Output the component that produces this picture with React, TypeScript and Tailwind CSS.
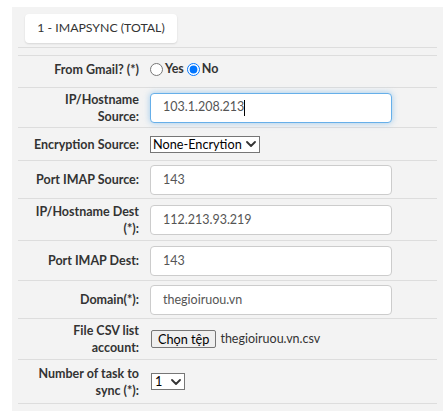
import React from "react";

const Chevron = () => (
  <svg width="10" height="6" viewBox="0 0 10 6" className="shrink-0">
    <path d="M1 1 L5 5 L9 1" fill="none" stroke="#333" strokeWidth="1.8" strokeLinecap="round" strokeLinejoin="round" />
  </svg>
);

const Row = ({ label, h, children }: { label: React.ReactNode; h: string; children: React.ReactNode }) => (
  <div className={`grid grid-cols-[129px_1fr] items-center border-b border-[#dddddd] ${h}`}>
    <div className="pr-2 text-right font-bold text-[12.5px] leading-[17px] text-[#333] whitespace-nowrap">{label}</div>
    <div className="pl-[3px] flex items-center">{children}</div>
  </div>
);

const TextBox = ({ value }: { value: string }) => (
  <input
    readOnly
    value={value}
    className="w-[242px] h-[30px] border border-[#cccccc] rounded-[4px] bg-white px-3 text-[12.5px] text-[#555] outline-none"
  />
);

export default function App() {
  return (
    <div className="bg-white pt-[7px] pl-[12px] pr-[4px] h-[411px] font-['Lato','Liberation_Sans',sans-serif] text-[#333]">
      <div className="bg-[#f3f3f3] px-[6px] pt-[7px] h-[404px]">
        <div className="border-b border-[#dddddd] pb-[4px] pl-[7px]">
          <div className="w-[152px] h-[29px] bg-white rounded-[4px] shadow-[0_1px_2px_rgba(0,0,0,0.12)] flex items-center justify-center text-[12.3px] text-[#333]">
            1 - IMAPSYNC (TOTAL)
          </div>
        </div>
        <div className="mt-[7px] border-t border-[#dddddd]">
          <Row label="From Gmail? (*)" h="h-[32px] pb-[4px]">
            <label className="flex items-center font-bold text-[12.5px]">
              <input type="radio" name="gmail" readOnly className="w-[13px] h-[13px] m-0" />
              <span className="ml-[2px]">Yes</span>
            </label>
            <label className="flex items-center font-bold text-[12.5px] ml-[3px]">
              <input type="radio" name="gmail" checked readOnly className="w-[13px] h-[13px] m-0" />
              <span className="ml-[2px]">No</span>
            </label>
          </Row>
          <Row label={<>IP/Hostname<br />Source:</>} h="h-[40px]">
            <div className="w-[242px] h-[30px] border border-[#66afe9] rounded-[4px] bg-white px-3 flex items-center text-[12.5px] text-[#555] shadow-[0_0_6px_rgba(102,175,233,0.6)]">
              <span>103.1.208.213</span>
              <span className="inline-block w-[1px] h-[16px] bg-black" />
            </div>
          </Row>
          <Row label="Encryption Source:" h="h-[33px]">
            <div className="h-[17px] border border-[#767676] bg-white flex items-center gap-[4px] pl-[2px] pr-[3px] text-[12.7px] leading-none text-black whitespace-nowrap">
              <span>None-Encrytion</span>
              <Chevron />
            </div>
          </Row>
          <Row label="Port IMAP Source:" h="h-[38px]">
            <TextBox value="143" />
          </Row>
          <Row label={<>IP/Hostname Dest<br />(*):</>} h="h-[42px]">
            <TextBox value="112.213.93.219" />
          </Row>
          <Row label="Port IMAP Dest:" h="h-[40px]">
            <TextBox value="143" />
          </Row>
          <Row label="Domain(*):" h="h-[38px]">
            <TextBox value="thegioiruou.vn" />
          </Row>
          <Row label={<>File CSV list<br />account:</>} h="h-[41px]">
            <div className="flex items-center ml-[1px] whitespace-nowrap">
              <button className="h-[18px] px-[6px] border border-[#767676] rounded-[2px] bg-[#efefef] text-[12.7px] leading-none text-black">
                Chọn tệp
              </button>
              <span className="ml-[4px] text-[12.5px] text-[#333]">thegioiruou.vn.csv</span>
            </div>
          </Row>
          <Row label={<>Number of task to<br />sync (*):</>} h="h-[44px]">
            <div className="ml-[1px] h-[17px] w-[34px] border border-[#767676] bg-white flex items-center justify-between pl-[3px] pr-[3px] text-[12.7px] leading-none text-black">
              <span>1</span>
              <Chevron />
            </div>
          </Row>
        </div>
      </div>
    </div>
  );
}
